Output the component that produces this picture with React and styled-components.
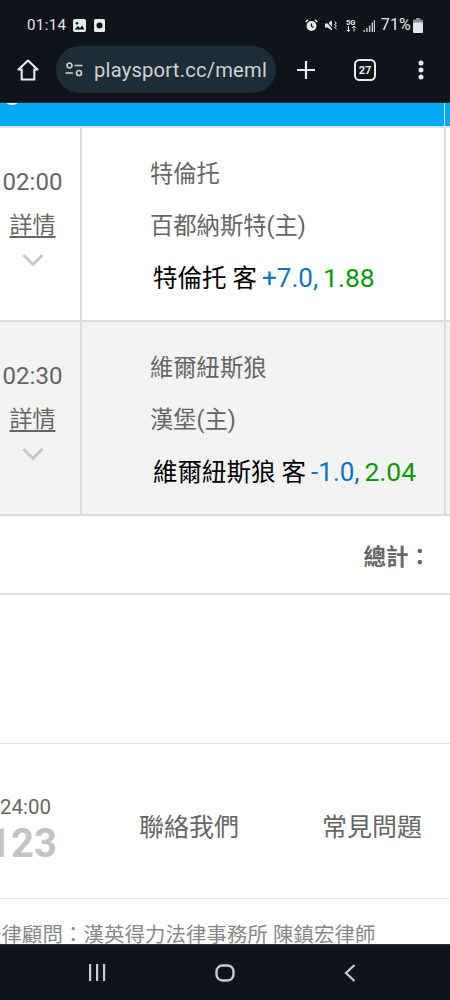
import React from 'react';
import styled, { createGlobalStyle } from 'styled-components';

const FONT = 'Roboto, "Noto Sans CJK TC", sans-serif';

const GlobalStyle = createGlobalStyle`
  html, body {
    margin: 0;
    padding: 0;
    background: #fff;
  }
`;

const Page = styled.div`
  width: 450px;
  height: 1000px;
  display: flex;
  flex-direction: column;
  overflow: hidden;
  font-family: ${FONT};
`;

const TopBars = styled.div`
  height: 103px;
  flex: none;
  background: #0f141b;
  box-sizing: border-box;
  border-bottom: 1px solid #2b3238;
`;

const StatusBar = styled.div`
  height: 46px;
  box-sizing: border-box;
  padding: 15px 27px 0 27px;
  display: flex;
  align-items: flex-start;
  justify-content: space-between;
  color: #e3e5e6;
`;

const StatusGroup = styled.div`
  display: flex;
  align-items: center;
  height: 20px;
`;

const StatusText = styled.span`
  font-size: ${(p) => p.$size || 15}px;
  letter-spacing: ${(p) => p.$spacing ?? 0.4}px;
  margin-left: ${(p) => p.$left || 0}px;
  line-height: 20px;
`;

const AddressRow = styled.div`
  height: 47px;
  display: flex;
  align-items: center;
  padding-left: 17px;
`;

const UrlPill = styled.div`
  width: 220px;
  height: 47px;
  margin-left: 17px;
  border-radius: 24px;
  background: #1e2c35;
  box-sizing: border-box;
  padding-left: 9px;
  display: flex;
  align-items: center;
  overflow: hidden;
  flex: none;
`;

const UrlText = styled.span`
  font-size: 20.2px;
  color: #ccd2d6;
  margin-left: 11px;
  white-space: nowrap;
  letter-spacing: 0.2px;
`;

const ToolButton = styled.div`
  display: flex;
  align-items: center;
  justify-content: center;
  flex: none;
  margin-left: ${(p) => p.$left}px;
  width: ${(p) => p.$width}px;
`;

const Main = styled.div`
  flex: 1;
  min-height: 0;
  overflow: hidden;
  background: #fff;
`;

const BlueBar = styled.div`
  position: relative;
  height: 23px;
  background: #03a9f4;
  border-bottom: 2px solid #d6e4ea;
  display: flex;
  justify-content: flex-end;
  padding-right: 5px;
  overflow: hidden;
`;

const BlueEdge = styled.div`
  width: 1px;
  background: #e6f0f4;
`;

const Arc = styled.div`
  position: absolute;
  left: 2px;
  top: -18px;
  width: 20px;
  height: 20px;
  box-sizing: border-box;
  border: 2px solid #e4f3fa;
  border-radius: 50%;
`;

const MatchRow = styled.div`
  height: ${(p) => p.$height}px;
  display: grid;
  grid-template-columns: 82px 362px 1fr;
  background: ${(p) => (p.$shaded ? '#f3f3f3' : '#fff')};
  border-bottom: 2px solid #dcdcdc;
  box-sizing: border-box;
`;

const TimeCell = styled.div`
  border-right: 2px solid #dcdcdc;
  display: flex;
  flex-direction: column;
  align-items: center;
  padding: 38px 15px 0 0;
`;

const Time = styled.div`
  font-size: 24px;
  line-height: 32px;
  color: #666;
`;

const Detail = styled.div`
  font-size: 23px;
  line-height: 26px;
  margin-top: 15px;
  color: #666;
  text-decoration: underline;
  text-underline-offset: 3px;
`;

const Chevron = styled.svg`
  display: block;
  margin-top: 14px;
`;

const GameCell = styled.div`
  display: flex;
  flex-direction: column;
  padding: 29px 0 0 68px;
`;

const TeamName = styled.div`
  font-size: 23.3px;
  line-height: 34px;
  height: 52px;
  color: #666;
`;

const Bet = styled.div`
  font-size: 24.5px;
  line-height: 34px;
  color: #000;
  margin: 0 0 0 3px;
  white-space: nowrap;
`;

const Handicap = styled.span`
  font-size: 26px;
  color: #0b76bd;
  margin-left: 5px;
`;

const Odds = styled.span`
  font-size: 26.5px;
  color: #0a9a0a;
  margin-left: 5px;
`;

const EdgeCell = styled.div`
  border-left: 2px solid #dcdcdc;
`;

const TotalRow = styled.div`
  height: 79px;
  box-sizing: border-box;
  border-bottom: 2px solid #e2e2e2;
  display: flex;
  justify-content: flex-end;
  padding: 25px 19px 0 0;
  font-size: 22.5px;
  line-height: 32px;
  font-weight: 700;
  color: #666;
`;

const Footer = styled.div`
  margin-top: 148px;
  height: 156px;
  box-sizing: border-box;
  border-top: 1px solid #e4e4e4;
  border-bottom: 1px solid #e4e4e4;
  display: flex;
  align-items: flex-start;
`;

const Hotline = styled.div`
  width: 60px;
  flex: none;
  padding-top: 50px;
  white-space: nowrap;
`;

const Hours = styled.div`
  font-size: 20.5px;
  line-height: 26px;
  color: #666;
`;

const Phone = styled.div`
  font-size: 40px;
  line-height: 46px;
  font-weight: 700;
  color: #c4c4c4;
  margin-left: -12px;
  margin-top: 1px;
`;

const FooterLink = styled.div`
  font-size: 25px;
  line-height: 34px;
  color: #666;
  margin-top: 67px;
  margin-left: ${(p) => p.$left}px;
  white-space: nowrap;
`;

const Legal = styled.div`
  margin: 22px 0 0 -19px;
  font-size: 20.4px;
  line-height: 28px;
  letter-spacing: 0.1px;
  color: #888;
  white-space: nowrap;
`;

const NavBar = styled.div`
  height: 56px;
  flex: none;
  background: #0f141b;
  border-top: 1px solid #2b3238;
  box-sizing: border-box;
  display: flex;
  align-items: center;
  padding: 0 0 0 88px;
`;

const NavIcon = styled.svg`
  display: block;
  flex: none;
  margin-left: ${(p) => p.$left || 0}px;
`;

const matches = [
  { time: '02:00', away: '特倫托', home: '百都納斯特(主)', pick: '特倫托 客', line: '+7.0,', odds: '1.88', height: 194 },
  { time: '02:30', away: '維爾紐斯狼', home: '漢堡(主)', pick: '維爾紐斯狼 客', line: '-1.0,', odds: '2.04', height: 194, shaded: true },
];

const StatusIcons = () => (
  <>
    <svg width="13" height="13" viewBox="0 0 13 13" style={{ marginLeft: 7 }}>
      <rect width="13" height="13" rx="2" fill="#e8eaeb" />
      <circle cx="4" cy="4.3" r="1.3" fill="#0f141b" />
      <path d="M1.5 10.5 5 7l2 2 2.2-2.5 2.3 4z" fill="#0f141b" />
    </svg>
    <svg width="11" height="13" viewBox="0 0 11 13" style={{ marginLeft: 8 }}>
      <rect width="11" height="13" rx="1.5" fill="#e8eaeb" />
      <circle cx="5.5" cy="6.5" r="3" fill="#0f141b" />
    </svg>
  </>
);

const StatusRight = () => (
  <StatusGroup>
    <svg width="13" height="13" viewBox="0 0 13 13">
      <circle cx="6.5" cy="7" r="5" fill="#e3e5e6" />
      <path d="M6.5 4.5V7.2L8.5 8.4" stroke="#0f141b" strokeWidth="1.2" fill="none" />
      <path d="M.7 3 3 .8M12.3 3 10 .8" stroke="#e3e5e6" strokeWidth="1.6" />
    </svg>
    <svg width="13" height="13" viewBox="0 0 13 13" style={{ marginLeft: 7 }}>
      <path d="M0 4.5h2.5L7 1.5v10L2.5 8.5H0z" fill="#e3e5e6" />
      <path d="M1 1l8 11" stroke="#0f141b" strokeWidth="1.2" />
      <path d="M9.5 2.5l2 1.5-2 1.5 2 1.5-2 1.5 2 1.5" stroke="#e3e5e6" strokeWidth="1" fill="none" />
    </svg>
    <svg width="11" height="14" viewBox="0 0 11 14" style={{ marginLeft: 8 }}>
      <path d="M2.5 8v5.5M.8 11.8l1.7 1.7 1.7-1.7M8 13.5V8M6.3 9.7 8 8l1.7 1.700" stroke="#e3e5e6" strokeWidth="1" fill="none" />
      <text x="0" y="6.500" fontSize="7.500" fontWeight="700" fill="#e3e5e6" fontFamily="Roboto, sans-serif">5G</text>
    </svg>
    <svg width="12" height="13" viewBox="0 0 12 13" style={{ marginLeft: 6 }}>
      <path d="M.5 11h1.400v2H.5zM3.200 9h1.400v4H3.200zM5.900 6.500h1.400V13H5.900zM8.600 3.500h1.400V13H8.600zM10.800 1h1.200v12h-1.200z" fill="#c9cccd" />
    </svg>
    <StatusText $left={6} $size={16} $spacing={0.2}>71%</StatusText>
    <svg width="10" height="15" viewBox="0 0 10 15" style={{ marginLeft: 2 }}>
      <path d="M3 0h4v2H3z" fill="#8d9092" />
      <rect y="1.500" width="10" height="4" rx="1" fill="#8d9092" />
      <rect y="4.500" width="10" height="10.500" rx="1" fill="#e3e5e6" />
    </svg>
  </StatusGroup>
);

const App = () => (
  <Page>
    <GlobalStyle />
    <TopBars>
      <StatusBar>
        <StatusGroup>
          <StatusText>01:14</StatusText>
          <StatusIcons />
        </StatusGroup>
        <StatusRight />
      </StatusBar>
      <AddressRow>
        <svg width="22" height="22" viewBox="0 0 22 22" fill="none" stroke="#e8eaeb" strokeWidth="2.100" strokeLinejoin="round">
          <path d="M11 1.500 1.500 10.500h3.200V20.500h12.600V10.500h3.200z" />
        </svg>
        <UrlPill>
          <svg width="18" height="15" viewBox="0 0 18 15" fill="none" stroke="#ccd2d6" strokeWidth="1.700">
            <circle cx="4.500" cy="3.500" r="2.500" />
            <path d="M9.500 3.500H17.500M.5 11H8" />
            <circle cx="14" cy="11" r="2.500" />
          </svg>
          <UrlText>playsport.cc/meml</UrlText>
        </UrlPill>
        <ToolButton $left={20} $width={20}>
          <svg width="20" height="20" viewBox="0 0 20 20" stroke="#e8eaeb" strokeWidth="2.200">
            <path d="M10 1v18M1 10h18" />
          </svg>
        </ToolButton>
        <ToolButton $left={38} $width={22}>
          <svg width="22" height="22" viewBox="0 0 22 22">
            <rect x="1" y="1" width="20" height="20" rx="4.500" fill="none" stroke="#e8eaeb" strokeWidth="2" />
            <text x="11" y="15" textAnchor="middle" fontSize="11" fontWeight="700" fill="#e8eaeb" fontFamily="Roboto, sans-serif">27</text>
          </svg>
        </ToolButton>
        <ToolButton $left={42} $width={6}>
          <svg width="6" height="20" viewBox="0 0 6 20" fill="#e8eaeb">
            <circle cx="3" cy="3" r="2.500" />
            <circle cx="3" cy="10" r="2.500" />
            <circle cx="3" cy="17" r="2.500" />
          </svg>
        </ToolButton>
      </AddressRow>
    </TopBars>
    <Main>
      <BlueBar>
        <Arc />
        <BlueEdge />
      </BlueBar>
      {matches.map((m) => (
        <MatchRow key={m.time} $height={m.height} $shaded={m.shaded}>
          <TimeCell>
            <Time>{m.time}</Time>
            <Detail>詳情</Detail>
            <Chevron width="22" height="14" viewBox="0 0 22 14" fill="none" stroke="#c8c8c8" strokeWidth="3">
              <path d="M1.500 2 11 11.500 20.500 2" />
            </Chevron>
          </TimeCell>
          <GameCell>
            <TeamName>{m.away}</TeamName>
            <TeamName>{m.home}</TeamName>
            <Bet>
              {m.pick}
              <Handicap>{m.line}</Handicap>
              <Odds>{m.odds}</Odds>
            </Bet>
          </GameCell>
          <EdgeCell />
        </MatchRow>
      ))}
      <TotalRow>總計：</TotalRow>
      <Footer>
        <Hotline>
          <Hours>24:00</Hours>
          <Phone>123</Phone>
        </Hotline>
        <FooterLink $left={79}>聯絡我們</FooterLink>
        <FooterLink $left={83}>常見問題</FooterLink>
      </Footer>
      <Legal>法律顧問：漢英得力法律事務所 陳鎮宏律師</Legal>
    </Main>
    <NavBar>
      <NavIcon width="18" height="17" viewBox="0 0 18 17" fill="#c9ccce">
        <path d="M1 0h2.200v17H1zM8 0h2.200v17H8zM15 0h2.200v17H15z" />
      </NavIcon>
      <NavIcon $left={109} width="20" height="18" viewBox="0 0 20 18" fill="none" stroke="#c9ccce" strokeWidth="2.400">
        <rect x="1.500" y="1.500" width="17" height="15" rx="6" />
      </NavIcon>
      <NavIcon $left={109} width="12" height="18" viewBox="0 0 12 18" fill="none" stroke="#c9ccce" strokeWidth="2.200">
        <path d="M10.500 1 2 9l8.500 8" />
      </NavIcon>
    </NavBar>
  </Page>
);

export default App;
